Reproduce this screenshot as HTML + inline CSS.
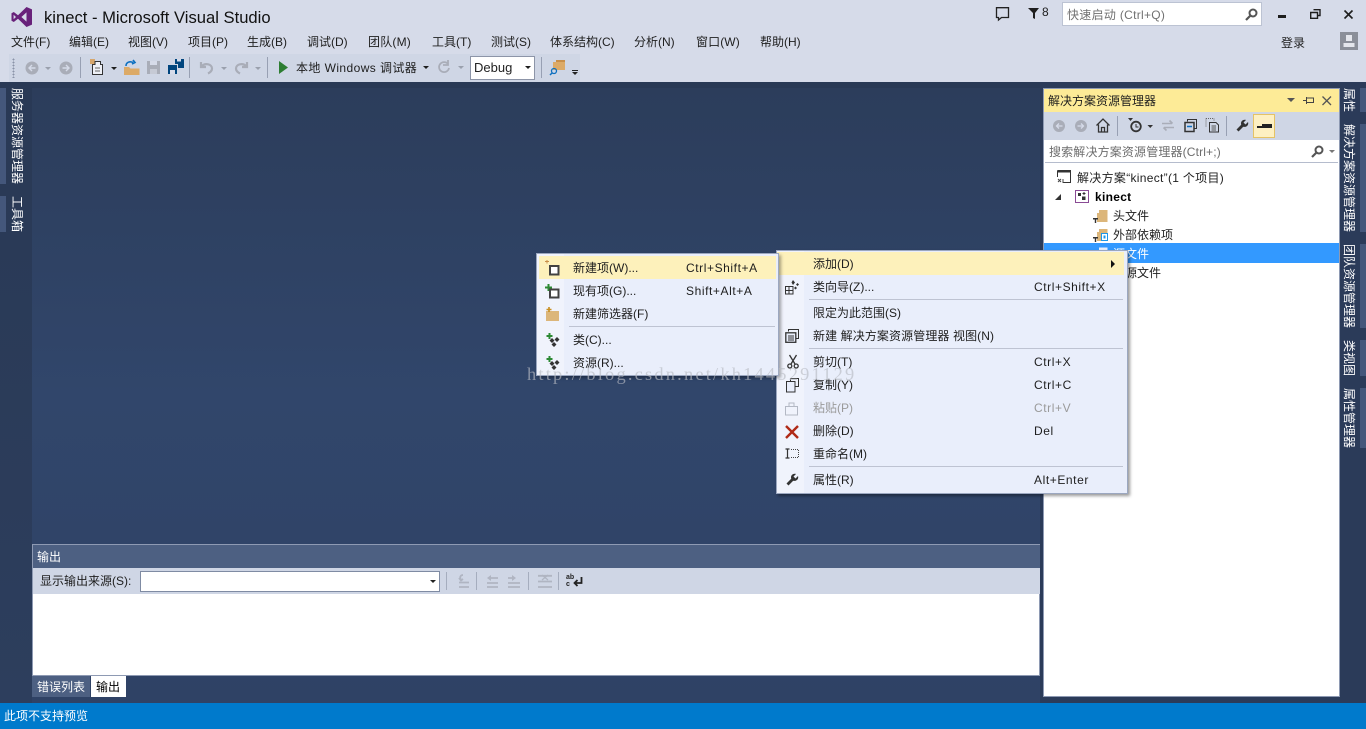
<!DOCTYPE html>
<html><head><meta charset="utf-8"><title>kinect - Microsoft Visual Studio</title>
<style>
html,body{margin:0;padding:0}
body{width:1366px;height:729px;overflow:hidden;position:relative;background:#d6dbe9;font-family:"Liberation Sans","Noto Sans CJK SC",sans-serif;font-size:12px;color:#1e1e1e}
.a{position:absolute}
.t{position:absolute;white-space:nowrap;line-height:16px;height:16px}
.k{letter-spacing:.58px}
.v{position:absolute;writing-mode:vertical-rl;text-orientation:sideways;white-space:nowrap;color:#fff;font-size:12px;line-height:12px}
svg{position:absolute;overflow:visible}
.sep{position:absolute;width:1px;background:#98a0b3}
.line{position:absolute;height:1px;background:#bec3d2}
.bar{position:absolute;background:#44577b}
</style></head><body>

<!-- Title -->
<svg style="left:11px;top:7px" width="22" height="20" viewBox="0 0 22 20"><path d="M15.5 0L21 2.4V17.6L15.5 20L7 11.8L2.8 15L0.5 13.8V6.2L2.8 5L7 8.2ZM15.5 5.4L10.4 10L15.5 14.6ZM2.6 7.8V12.2L5 10Z" fill="#68217a"/></svg>
<div class="t" style="left:44px;top:8px;font-size:16.6px;line-height:20px;height:20px;color:#111">kinect - Microsoft Visual Studio</div>

<!-- Top right -->
<svg style="left:995px;top:7px" width="15" height="14"><path d="M1.5 .7H13.5V10.5H6.5L3.5 13V10.500H1.500Z" fill="none" stroke="#222" stroke-width="1.300"/></svg>
<svg style="left:1028px;top:8px" width="12" height="11"><path d="M0 0H11L7 5V11L5 10V5Z" fill="#1e1e1e"/></svg>
<div class="t" style="left:1042px;top:4px">8</div>
<div class="a" style="left:1062px;top:2px;width:198px;height:22px;border:1px solid #bcc3d3;background:#fff"></div>
<div class="t" style="left:1067px;top:7px;color:#717171;letter-spacing:.3px">快速启动 (Ctrl+Q)</div>
<svg style="left:1245px;top:8px" width="13" height="13"><circle cx="8" cy="5" r="3.5" fill="none" stroke="#555" stroke-width="2"/><path d="M5.5 7.5L1 12" stroke="#555" stroke-width="2.2"/></svg>
<div class="a" style="left:1278px;top:15px;width:8px;height:3px;background:#1e1e1e"></div>
<svg style="left:1310px;top:9px" width="11" height="10"><path d="M3.500 .7H10V6.500H8M.7 3.500H7.500V9.300H.7Z" fill="none" stroke="#1e1e1e" stroke-width="1.400"/></svg>
<svg style="left:1344px;top:10px" width="9" height="9"><path d="M.5 .5L8.500 8.500M8.500 .5L.5 8.500" stroke="#1e1e1e" stroke-width="1.600"/></svg>
<div class="t" style="left:1281px;top:35px">登录</div>
<div class="a" style="left:1340px;top:32px;width:18px;height:18px;background:#8b8f99"></div>
<svg style="left:1340px;top:32px" width="18" height="18"><rect x="6" y="3" width="6" height="6" fill="#e4e6ec"/><path d="M3.500 15V11H14.500V15Z" fill="#e4e6ec"/></svg>

<!-- Menu -->
<div class="t" style="left:11px;top:34px">文件(F)</div>
<div class="t" style="left:69px;top:34px">编辑(E)</div>
<div class="t" style="left:128px;top:34px">视图(V)</div>
<div class="t" style="left:188px;top:34px">项目(P)</div>
<div class="t" style="left:247px;top:34px">生成(B)</div>
<div class="t" style="left:307px;top:34px">调试(D)</div>
<div class="t" style="left:368px;top:34px;letter-spacing:.2px">团队(M)</div>
<div class="t" style="left:432px;top:34px">工具(T)</div>
<div class="t" style="left:491px;top:34px">测试(S)</div>
<div class="t" style="left:550px;top:34px">体系结构(C)</div>
<div class="t" style="left:634px;top:34px">分析(N)</div>
<div class="t" style="left:696px;top:34px;letter-spacing:.1px">窗口(W)</div>
<div class="t" style="left:760px;top:34px">帮助(H)</div>

<!-- Toolbar -->
<div class="a" style="left:9px;top:54px;width:571px;height:28px;background:#cfd6e5"></div>
<div class="a" style="left:12px;top:58px;width:3px;height:20px;background-image:radial-gradient(#8a93a8 45%,transparent 50%);background-size:3px 3px"></div>
<svg style="left:25px;top:60px" width="50" height="16"><circle cx="7" cy="8" r="6.500" fill="#a9adb8"/><path d="M10.500 8H4.500M7 5L4 8L7 11" stroke="#d6dbe9" stroke-width="1.400" fill="none"/><path d="M20 7H26L23 10Z" fill="#9aa0ad"/><circle cx="41" cy="8" r="6.500" fill="#a9adb8"/><path d="M37.500 8H43.500M41 5L44 8L41 11" stroke="#d6dbe9" stroke-width="1.400" fill="none"/></svg>
<div class="sep" style="left:80px;top:57px;height:21px"></div>
<svg style="left:90px;top:59px" width="28" height="17"><rect x="0" y="0" width="5" height="5" fill="#d79a4e" opacity=".8"/><path d="M2.500 5.500H5V2.500H10.500V5.500H12.500V15.500H2.500Z" fill="#eef0f6" stroke="#333"/><path d="M5 9H10M5 12H10" stroke="#666"/><path d="M21 8H27L24 11Z" fill="#1e1e1e"/></svg>
<svg style="left:124px;top:59px" width="16" height="17"><path d="M0 8H5L6.500 9.500H15.500V16H0Z" fill="#dcaa67"/><path d="M2 7C2 3 6 2 9 3.500M9 1L11 3.500L8 5" stroke="#0e70c0" stroke-width="1.600" fill="none"/></svg>
<svg style="left:147px;top:61px" width="13" height="13"><path d="M0 0H13V13H0Z" fill="#a9adb8"/><rect x="3" y="0" width="7" height="4" fill="#d6dbe9"/><rect x="3" y="8" width="7" height="5" fill="#c6cad5"/></svg>
<svg style="left:168px;top:59px" width="16" height="16"><path d="M0 6H9V15H0ZM7 0H16V9H10V5H7Z" fill="#00457e"/><rect x="2" y="11" width="5" height="4" fill="#d6dbe9"/><rect x="9" y="0" width="4" height="2.500" fill="#d6dbe9"/></svg>
<div class="sep" style="left:189px;top:57px;height:21px"></div>
<svg style="left:198px;top:60px" width="65" height="15"><path d="M3 2V7H8M3.500 6.500C7 2.500 14 4 14 8.500C14 11 12 12.500 10 13.500" fill="none" stroke="#a9adb8" stroke-width="2.200"/><path d="M23 7H29L26 10Z" fill="#9aa0ad"/><path d="M49 2V7H44M48.500 6.500C45 2.500 38 4 38 8.500C38 11 40 12.500 42 13.500" fill="none" stroke="#a9adb8" stroke-width="2.200"/><path d="M57 7H63L60 10Z" fill="#9aa0ad"/></svg>
<div class="sep" style="left:267px;top:57px;height:21px"></div>
<svg style="left:279px;top:61px" width="10" height="13"><path d="M0 0L9 6.500L0 13Z" fill="#2d7d32"/></svg>
<div class="t" style="left:296px;top:60px;letter-spacing:.42px">本地 Windows 调试器</div>
<svg style="left:423px;top:66px" width="7" height="4"><path d="M0 0H6L3 3Z" fill="#1e1e1e"/></svg>
<svg style="left:437px;top:60px" width="42" height="15"><path d="M11 4A5 5 0 1 0 12 8M11 0V5H6" fill="none" stroke="#a9adb8" stroke-width="1.800"/><path d="M21 6H27L24 9Z" fill="#9aa0ad"/></svg>
<div class="a" style="left:470px;top:56px;width:63px;height:22px;border:1px solid #8d95a8;background:#fff"></div>
<div class="t" style="left:474px;top:60px;font-size:13px;color:#222">Debug</div>
<svg style="left:525px;top:66px" width="7" height="4"><path d="M0 0H6L3 3Z" fill="#1e1e1e"/></svg>
<div class="sep" style="left:541px;top:57px;height:21px"></div>
<svg style="left:550px;top:59px" width="16" height="17"><path d="M3 3H15V11H3Z" fill="#dcaa67"/><path d="M6 1H15V3H6Z" fill="#c98f49"/><circle cx="4" cy="12" r="2.500" fill="none" stroke="#0e70c0" stroke-width="1.300"/><path d="M2 14L0 16" stroke="#0e70c0" stroke-width="1.500"/></svg>
<div class="a" style="left:572px;top:70px;width:6px;height:1px;background:#222"></div>
<svg style="left:572px;top:72px" width="7" height="4"><path d="M0 0H6L3 3Z" fill="#222"/></svg>

<!-- Body -->
<div class="a" style="left:0;top:82px;width:1366px;height:621px;background:linear-gradient(#293955,#2c3c5b)"></div>
<div class="a" style="left:32px;top:88px;width:1008px;height:615px;background:linear-gradient(#2c3d5b 0,#31466b 50%,#2f4265 100%)"></div>
<div class="a" style="left:0;top:82px;width:32px;height:621px;background:linear-gradient(#293955,#2d3e5d)"></div>
<div class="a" style="left:1040px;top:82px;width:326px;height:621px;background:#2b3b59"></div>

<!-- Left tabs -->
<div class="bar" style="left:0;top:88px;width:6px;height:96px"></div>
<div class="bar" style="left:0;top:196px;width:6px;height:36px"></div>
<div class="v" style="left:11px;top:88px">服务器资源管理器</div>
<div class="v" style="left:11px;top:196px">工具箱</div>

<!-- Right tabs -->
<div class="bar" style="left:1360px;top:88px;width:6px;height:24px"></div>
<div class="bar" style="left:1360px;top:124px;width:6px;height:108px"></div>
<div class="bar" style="left:1360px;top:244px;width:6px;height:84px"></div>
<div class="bar" style="left:1360px;top:340px;width:6px;height:36px"></div>
<div class="bar" style="left:1360px;top:388px;width:6px;height:60px"></div>
<div class="v" style="left:1343px;top:88px">属性</div>
<div class="v" style="left:1343px;top:124px">解决方案资源管理器</div>
<div class="v" style="left:1343px;top:244px">团队资源管理器</div>
<div class="v" style="left:1343px;top:340px">类视图</div>
<div class="v" style="left:1343px;top:388px">属性管理器</div>

<!-- Solution Explorer -->
<div class="a" style="left:1043px;top:88px;width:297px;height:609px;background:#fff"></div>
<div class="a" style="left:1043px;top:88px;width:297px;height:609px;box-shadow:inset 0 0 0 1px #8e9ab3"></div>
<div class="a" style="left:1044px;top:89px;width:295px;height:23px;background:#fdeb97"></div>
<div class="t" style="left:1048px;top:93px">解决方案资源管理器</div>
<svg style="left:1287px;top:98px" width="9" height="5"><path d="M0 0H8L4 4Z" fill="#555"/></svg>
<svg style="left:1303px;top:96px" width="12" height="9"><path d="M0 4.500H3.500M3.500 1V8M3.500 2H10.500V6.500H3.500" fill="none" stroke="#444"/></svg>
<svg style="left:1322px;top:96px" width="10" height="10"><path d="M.5.5L9 9M9 .5L.5 9" stroke="#555" stroke-width="1.300"/></svg>
<div class="a" style="left:1044px;top:112px;width:295px;height:28px;background:#cfd6e5"></div>
<svg style="left:1052px;top:119px" width="40" height="14"><circle cx="7" cy="7" r="6" fill="#a9adb8"/><path d="M10.500 7H4.500M7 4.500L4.500 7L7 9.500" stroke="#d6dbe9" stroke-width="1.300" fill="none"/><circle cx="29" cy="7" r="6" fill="#a9adb8"/><path d="M25.500 7H31.500M29 4.500L31.500 7L29 9.500" stroke="#d6dbe9" stroke-width="1.300" fill="none"/></svg>
<svg style="left:1096px;top:118px" width="14" height="15"><path d="M.5 7.500L7 1L13.500 7.500M2.500 6.500V14H11.500V6.500M5.500 14V9.500H8.500V14" fill="none" stroke="#333" stroke-width="1.300"/></svg>
<div class="sep" style="left:1117px;top:116px;height:20px"></div>
<svg style="left:1128px;top:118px" width="28" height="15"><path d="M0 0H5L2.500 3Z" fill="#333"/><circle cx="8" cy="8.500" r="4.800" fill="none" stroke="#333" stroke-width="1.800"/><path d="M8 6V9H10.500" stroke="#333" fill="none"/><path d="M19.500 7H25L22.250 10Z" fill="#333"/></svg>
<svg style="left:1161px;top:119px" width="14" height="13"><path d="M1 4.500H11M8.500 1.500L11.500 4.500M13 8.500H3M5.500 11.500L2.500 8.500" stroke="#a9adb8" stroke-width="1.600" fill="none"/></svg>
<svg style="left:1184px;top:119px" width="13" height="13"><path d="M3.500 2.500V.5H12.500V9.500H10.500" fill="none" stroke="#333"/><path d="M1 3.500H10V12.500H1Z" fill="none" stroke="#333" stroke-width="1.500"/><path d="M3 7.500H8" stroke="#0e70c0" stroke-width="1.500"/></svg>
<svg style="left:1205px;top:118px" width="15" height="15"><path d="M1 .5H9V3M1 .5V9" fill="none" stroke="#666" stroke-dasharray="1 1"/><path d="M4.500 4.500H11L13.500 7V14H4.500Z" fill="none" stroke="#333"/><path d="M6.500 8H11M6.500 10H11M6.500 12H11" stroke="#555"/></svg>
<div class="sep" style="left:1226px;top:116px;height:20px"></div>
<svg style="left:1236px;top:119px" width="13" height="13"><path d="M12 3L9.500 5.500L7.500 3.500L10 1C7.500 .2 5 1.800 5 4.500L5.200 5.800L.5 10.500L2.500 12.500L7.200 7.800C10.500 8.500 13 6 12 3Z" fill="#333"/></svg>
<div class="a" style="left:1253px;top:114px;width:20px;height:22px;border:1px solid #e5c365;background:#fdf0c2"></div>
<div class="a" style="left:1257px;top:126px;width:15px;height:2px;background:#222"></div>
<div class="a" style="left:1262px;top:124px;width:10px;height:2px;background:#222"></div>
<div class="a" style="left:1045px;top:141px;width:293px;height:21px;background:#fff;border-bottom:1px solid #b5bccd"></div>
<div class="t" style="left:1049px;top:144px;color:#6d6d6d;letter-spacing:.15px">搜索解决方案资源管理器(Ctrl+;)</div>
<svg style="left:1311px;top:145px" width="13" height="13"><circle cx="8" cy="5" r="3.500" fill="none" stroke="#555" stroke-width="2"/><path d="M5.500 7.500L1 12" stroke="#555" stroke-width="2.200"/></svg>
<svg style="left:1329px;top:150px" width="7" height="4"><path d="M0 0H6L3 3Z" fill="#777"/></svg>

<!-- Tree -->
<svg style="left:1057px;top:170px" width="14" height="14"><path d="M.5.5H13.500V12.500H6M.5.500V7" fill="none" stroke="#333"/><rect x=".5" y=".5" width="13" height="2" fill="#333"/><path d="M1 9L4 12M4 9L1 12M6 9V13" stroke="#444"/></svg>
<div class="t" style="left:1077px;top:170px;letter-spacing:.3px">解决方案“kinect”(1 个项目)</div>
<svg style="left:1055px;top:194px" width="7" height="6"><path d="M6 0V6H0Z" fill="#333"/></svg>
<svg style="left:1075px;top:190px" width="14" height="13"><rect x=".5" y=".5" width="13" height="12" fill="#fff" stroke="#8a4b95"/><path d="M3 3H6V6H3ZM7 6.500H10.500V10H7Z" fill="#333"/><path d="M9 2V5M7.500 3.500H10.500" stroke="#333"/></svg>
<div class="t" style="left:1095px;top:189px;font-weight:bold;color:#000;letter-spacing:.3px">kinect</div>
<svg style="left:1093px;top:210px" width="15" height="13"><path d="M4 3H6V0H14.500V12H4Z" fill="#dcb67a"/><path d="M0 8H5V9.500H3.200V13H1.800V9.500H0Z" fill="#333"/></svg>
<div class="t" style="left:1113px;top:208px">头文件</div>
<svg style="left:1093px;top:229px" width="15" height="13"><path d="M4 3H6V0H14.500V4H9V12H4Z" fill="#dcb67a"/><rect x="8.500" y="4.500" width="6" height="7" fill="#fff" stroke="#1c97ea"/><rect x="10.500" y="6.500" width="2" height="3" fill="#1c97ea"/><path d="M0 8H5V9.500H3.200V13H1.800V9.500H0Z" fill="#333"/></svg>
<div class="t" style="left:1113px;top:227px">外部依赖项</div>
<div class="a" style="left:1044px;top:243px;width:295px;height:20px;background:#3399ff"></div>
<svg style="left:1093px;top:247px" width="15" height="12"><path d="M4 3H6V0.500H14.500V11H4Z" fill="#e8eefb"/></svg>
<div class="t" style="left:1113px;top:246px;color:#fff">源文件</div>
<div class="t" style="left:1113px;top:265px">资源文件</div>

<!-- Output pane -->
<div class="a" style="left:32px;top:544px;width:1008px;height:132px;box-shadow:inset 0 0 0 1px #8e9ab3;background:#fff"></div>
<div class="a" style="left:33px;top:545px;width:1007px;height:23px;background:#4d6082"></div>
<div class="t" style="left:37px;top:549px;color:#fff">输出</div>
<div class="a" style="left:33px;top:568px;width:1007px;height:26px;background:#cfd6e5"></div>
<div class="t" style="left:40px;top:573px">显示输出来源(S):</div>
<div class="a" style="left:140px;top:571px;width:298px;height:19px;background:#fff;border:1px solid #7f8ba3"></div>
<svg style="left:430px;top:580px" width="7" height="4"><path d="M0 0H6L3 3Z" fill="#222"/></svg>
<div class="sep" style="left:446px;top:572px;height:18px;background:#a5adbe"></div>
<svg style="left:456px;top:574px" width="14" height="15"><path d="M7 1C4 1 3.500 4 5 6M3 4L5 6.500L7 5" stroke="#b0b5c2" fill="none" stroke-width="1.800"/><path d="M3 8.500H13M3 13H13" stroke="#b0b5c2" stroke-width="1.800"/></svg>
<div class="sep" style="left:476px;top:572px;height:18px;background:#a5adbe"></div>
<svg style="left:486px;top:574px" width="36" height="15"><path d="M5 1L1 4L5 7Z" fill="#b0b5c2"/><path d="M5 4H12M1 9H12M1 13H12" fill="none" stroke="#b0b5c2" stroke-width="1.800"/><path d="M26 1L30 4L26 7Z" fill="#b0b5c2"/><path d="M22 4H27M22 9H34M22 13H34" fill="none" stroke="#b0b5c2" stroke-width="1.800"/></svg>
<div class="sep" style="left:528px;top:572px;height:18px;background:#a5adbe"></div>
<svg style="left:538px;top:575px" width="14" height="13"><path d="M0 .8H14M0 6.500H14M0 12H14" stroke="#b0b5c2" stroke-width="1.800"/><path d="M4 0L10 5M10 0L4 5" stroke="#b0b5c2" stroke-width="1.200"/></svg>
<div class="sep" style="left:558px;top:572px;height:18px;background:#a5adbe"></div>
<div class="t" style="left:566px;top:574px;font-size:7px;line-height:7px;height:7px;font-weight:bold;color:#222">ab</div>
<div class="t" style="left:566px;top:581px;font-size:7px;line-height:7px;height:7px;font-weight:bold;color:#222">c</div>
<svg style="left:572px;top:576px" width="11" height="11"><path d="M9.500 1V7H3M5.500 4L2.500 7L5.500 10" fill="none" stroke="#222" stroke-width="1.800"/></svg>

<!-- Tabs -->
<div class="a" style="left:32px;top:676px;width:58px;height:21px;background:#4d6082"></div>
<div class="t" style="left:37px;top:679px;color:#fff">错误列表</div>
<div class="a" style="left:91px;top:676px;width:35px;height:21px;background:#fff"></div>
<div class="t" style="left:96px;top:679px;color:#000">输出</div>

<!-- Status -->
<div class="a" style="left:0;top:703px;width:1366px;height:26px;background:#007acc"></div>
<div class="t" style="left:4px;top:708px;color:#fff">此项不支持预览</div>

<!-- Main context menu -->
<div class="a" style="left:776px;top:250px;width:350px;height:242px;background:#e9eefb;border:1px solid #9ba7c0;box-shadow:2px 2px 3px rgba(0,0,0,.4)"></div>
<div class="a" style="left:777px;top:251px;width:27px;height:242px;background:#f0f3fc"></div>
<div class="a" style="left:777px;top:252px;width:347px;height:23px;background:#fdf1bb"></div>
<svg style="left:1111px;top:260px" width="5" height="8"><path d="M0 0L4 4L0 8Z" fill="#111"/></svg>
<div class="t" style="left:813px;top:256px">添加(D)</div>
<svg style="left:785px;top:280px" width="15" height="15"><path d="M.5 6.500H8V14H.5ZM.5 10.500H8M4 6.500V14" fill="none" stroke="#333"/><path d="M8 0L10 2.500L8 5L6.500 2.500ZM12.500 3L14 4.500L12.500 6L11 4.500ZM10.500 6.500L12 8L10.500 9.500L9 8Z" fill="#333"/></svg>
<div class="t" style="left:813px;top:279px">类向导(Z)...</div>
<div class="t k" style="left:1034px;top:279px">Ctrl+Shift+X</div>
<div class="line" style="left:809px;top:299px;width:314px"></div>
<div class="t" style="left:813px;top:305px">限定为此范围(S)</div>
<svg style="left:785px;top:329px" width="14" height="14"><path d="M3.500 2.500V.5H13.500V9.500H11" fill="none" stroke="#333"/><rect x=".8" y="3.800" width="10" height="9.500" fill="#e9eefb" stroke="#333" stroke-width="1.300"/><path d="M3 7H9M3 9H9M3 11H9" stroke="#333"/></svg>
<div class="t" style="left:813px;top:328px;letter-spacing:.1px">新建 解决方案资源管理器 视图(N)</div>
<div class="line" style="left:809px;top:348px;width:314px"></div>
<svg style="left:787px;top:355px" width="12" height="14"><path d="M2.500 0L8 9M9.500 0L4 9" stroke="#333" stroke-width="1.300"/><circle cx="2.800" cy="11" r="2" fill="none" stroke="#333" stroke-width="1.300"/><circle cx="9.200" cy="11" r="2" fill="none" stroke="#333" stroke-width="1.300"/></svg>
<div class="t" style="left:813px;top:354px">剪切(T)</div>
<div class="t k" style="left:1034px;top:354px">Ctrl+X</div>
<svg style="left:786px;top:378px" width="13" height="15"><path d="M4.500 3.500V.5H12.500V8.500H9.500" fill="none" stroke="#333"/><rect x=".5" y="3.500" width="8.500" height="10.500" fill="#e9eefb" stroke="#333"/></svg>
<div class="t" style="left:813px;top:377px">复制(Y)</div>
<div class="t k" style="left:1034px;top:377px">Ctrl+C</div>
<svg style="left:785px;top:401px" width="13" height="15"><path d="M.5 5.500H12.500V14H.5ZM4 5V2H9V5" fill="none" stroke="#b3b8c4"/></svg>
<div class="t" style="left:813px;top:400px;color:#9a9a9a">粘贴(P)</div>
<div class="t k" style="left:1034px;top:400px;color:#9a9a9a">Ctrl+V</div>
<svg style="left:785px;top:425px" width="14" height="14"><path d="M1 1L13 13M13 1L1 13" stroke="#b02a17" stroke-width="2.400"/></svg>
<div class="t" style="left:813px;top:423px">删除(D)</div>
<div class="t k" style="left:1034px;top:423px">Del</div>
<svg style="left:785px;top:448px" width="14" height="11"><path d="M.5 1H4.500M2.500 1V10M.5 10H4.500" fill="none" stroke="#333" stroke-width="1.200"/><path d="M6 1.500H13.500V9.500H6" fill="none" stroke="#444" stroke-dasharray="1 1"/></svg>
<div class="t" style="left:813px;top:446px">重命名(M)</div>
<div class="line" style="left:809px;top:466px;width:314px"></div>
<svg style="left:786px;top:473px" width="13" height="13"><path d="M12 3L9.500 5.500L7.500 3.500L10 1C7.500 .2 5 1.800 5 4.500L5.200 5.800L.5 10.500L2.500 12.500L7.200 7.800C10.500 8.500 13 6 12 3Z" fill="#333"/></svg>
<div class="t" style="left:813px;top:472px">属性(R)</div>
<div class="t k" style="left:1034px;top:472px">Alt+Enter</div>

<!-- Submenu (on top of main) -->
<div class="a" style="left:536px;top:253px;width:241px;height:121px;background:#e9eefb;border:1px solid #9ba7c0;box-shadow:2px 2px 3px rgba(0,0,0,.35)"></div>
<div class="a" style="left:537px;top:254px;width:27px;height:121px;background:#f0f3fc"></div>
<div class="a" style="left:539px;top:256px;width:237px;height:23px;background:#fdf1bb"></div>
<svg style="left:545px;top:260px" width="16" height="16"><path d="M0 1.500H4M2 0V3.500" stroke="#c98f49"/><rect x="5" y="6" width="8.500" height="8.500" fill="#fff" stroke="#424242" stroke-width="2"/></svg>
<svg style="left:545px;top:284px" width="16" height="15"><path d="M3.500 0V7M0 3.500H7" stroke="#2d8a34" stroke-width="2"/><rect x="5" y="5.500" width="8.500" height="8" fill="#fff" stroke="#424242" stroke-width="2"/></svg>
<svg style="left:546px;top:307px" width="14" height="14"><path d="M0 4H13V14H0Z" fill="#dcb67a"/><path d="M3 0V5M.5 2.500H5.500" stroke="#c98f20" stroke-width="1.600"/></svg>
<svg style="left:546px;top:333px" width="14" height="14"><path d="M3.500 0V6M.5 3H6.500" stroke="#2d8a34" stroke-width="2"/><path d="M6 5L8.500 7.500L6 10L3.500 7.500ZM11 4L13.500 6.500L11 9L8.500 6.500ZM8 9L10.500 11.500L8 14L5.500 11.500Z" fill="#333"/></svg>
<svg style="left:546px;top:356px" width="14" height="14"><path d="M3.500 0V6M.5 3H6.500" stroke="#2d8a34" stroke-width="2"/><path d="M6 5L8.500 7.500L6 10L3.500 7.500ZM11 4L13.500 6.500L11 9L8.500 6.500ZM8 9L10.500 11.500L8 14L5.500 11.500Z" fill="#333"/></svg>
<div class="t" style="left:573px;top:260px">新建项(W)...</div>
<div class="t k" style="left:686px;top:260px">Ctrl+Shift+A</div>
<div class="t" style="left:573px;top:283px">现有项(G)...</div>
<div class="t k" style="left:686px;top:283px">Shift+Alt+A</div>
<div class="t" style="left:573px;top:306px">新建筛选器(F)</div>
<div class="line" style="left:569px;top:326px;width:206px"></div>
<div class="t" style="left:573px;top:332px">类(C)...</div>
<div class="t" style="left:573px;top:355px">资源(R)...</div>

<!-- Watermark -->
<div class="t" style="left:527px;top:364px;font-family:'Liberation Serif',serif;font-size:18.4px;line-height:20px;height:20px;letter-spacing:2.2px;color:rgba(185,188,195,.65)">http://blog.csdn.net/kh1445291129</div>
</body></html>
